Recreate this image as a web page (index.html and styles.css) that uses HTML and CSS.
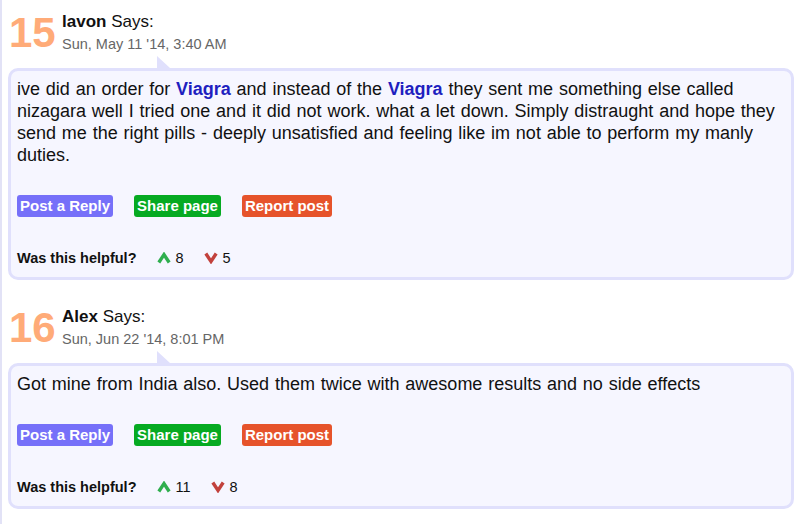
FILE: index.html
```html
<!DOCTYPE html>
<html>
<head>
<meta charset="utf-8">
<link rel="stylesheet" href="styles.css">
</head>
<body>
<div class="thread">
  <div class="post">
    <div class="post-head">
      <div class="num">15</div>
      <div class="meta">
        <div class="author"><b>lavon</b> Says:</div>
        <div class="date">Sun, May 11 '14, 3:40 AM</div>
      </div>
    </div>
    <div class="bubble">
      <span class="tail"></span>
      <p class="text">ive did an order for <a class="kw" href="#">Viagra</a> and instead of the <a class="kw" href="#">Viagra</a> they sent me something else called nizagara well I tried one and it did not work. what a let down. Simply distraught and hope they send me the right pills - deeply unsatisfied and feeling like im not able to perform my manly duties.</p>
      <div class="actions">
        <a class="btn btn-reply" href="#">Post a Reply</a>
        <a class="btn btn-share" href="#">Share page</a>
        <a class="btn btn-report" href="#">Report post</a>
      </div>
      <div class="helpful">
        <span class="helpful-label">Was this helpful?</span>
        <span class="vote"><svg class="ico" width="14" height="12" viewBox="0 0 14 12"><polyline points="1.8,10.5 7,2.6 12.2,10.5" fill="none" stroke="#2fae4e" stroke-width="3.4"/></svg>8</span>
        <span class="vote"><svg class="ico" width="14" height="12" viewBox="0 0 14 12"><polyline points="1.8,1.5 7,9.4 12.2,1.5" fill="none" stroke="#c2413c" stroke-width="3.4"/></svg>5</span>
      </div>
    </div>
  </div>

  <div class="post">
    <div class="post-head">
      <div class="num">16</div>
      <div class="meta">
        <div class="author"><b>Alex</b> Says:</div>
        <div class="date">Sun, Jun 22 '14, 8:01 PM</div>
      </div>
    </div>
    <div class="bubble">
      <span class="tail"></span>
      <p class="text">Got mine from India also. Used them twice with awesome results and no side effects</p>
      <div class="actions">
        <a class="btn btn-reply" href="#">Post a Reply</a>
        <a class="btn btn-share" href="#">Share page</a>
        <a class="btn btn-report" href="#">Report post</a>
      </div>
      <div class="helpful">
        <span class="helpful-label">Was this helpful?</span>
        <span class="vote"><svg class="ico" width="14" height="12" viewBox="0 0 14 12"><polyline points="1.8,10.5 7,2.6 12.2,10.5" fill="none" stroke="#2fae4e" stroke-width="3.4"/></svg>11</span>
        <span class="vote"><svg class="ico" width="14" height="12" viewBox="0 0 14 12"><polyline points="1.8,1.5 7,9.4 12.2,1.5" fill="none" stroke="#c2413c" stroke-width="3.4"/></svg>8</span>
      </div>
    </div>
  </div>
</div>
</body>
</html>
```

FILE: styles.css
```css
html, body {
  margin: 0;
  padding: 0;
  background: #ffffff;
}
body {
  font-family: "Liberation Sans", Arial, sans-serif;
  color: #111111;
}
.thread {
  border-left: 2px solid #e2e2f6;
  padding: 0 11px 0 6px;
  min-height: 524px;
  box-sizing: border-box;
}
.post {
  margin-bottom: 15px;
}
.post-head {
  display: flex;
  align-items: flex-start;
  padding-top: 12px;
  height: 68px;
  box-sizing: border-box;
}
.num {
  font-weight: bold;
  font-size: 42px;
  line-height: 42px;
  color: #ffab78;
  width: 53px;
  padding-left: 1px;
}
.meta {
  display: flex;
  flex-direction: column;
}
.author {
  font-size: 17px;
  line-height: 20px;
  color: #111;
}
.date {
  font-size: 14.5px;
  line-height: 18px;
  margin-top: 3px;
  color: #666666;
}
.bubble {
  position: relative;
  background: #f6f6ff;
  border: 3px solid #e0e0fc;
  border-radius: 10px;
  padding: 7px 10px 9px 6px;
}
.tail {
  position: absolute;
  left: 146px;
  top: -15px;
  width: 0;
  height: 0;
  border-bottom: 12px solid #e0e0fc;
  border-right: 13px solid transparent;
}
.text {
  margin: 0;
  font-size: 18px;
  line-height: 22px;
  word-spacing: 0.8px;
}
.kw {
  color: #1f1fbf;
  font-weight: bold;
  text-decoration: none;
}
.actions {
  display: flex;
  gap: 21px;
  margin-top: 29px;
}
.btn {
  display: block;
  height: 22px;
  line-height: 22px;
  padding: 0 3px;
  border-radius: 3px;
  font-size: 15px;
  font-weight: bold;
  color: #ffffff;
  text-decoration: none;
}
.btn-reply { background: #7670f9; }
.btn-share { background: #06aa22; }
.btn-report { background: #e6532b; }
.helpful {
  display: flex;
  align-items: center;
  margin-top: 31px;
  font-size: 14.5px;
  line-height: 20px;
}
.helpful-label {
  font-weight: bold;
  margin-right: 20px;
}
.vote {
  display: flex;
  align-items: center;
  margin-right: 20px;
  font-size: 14.5px;
}
.ico {
  margin-right: 5px;
  display: block;
}
```
